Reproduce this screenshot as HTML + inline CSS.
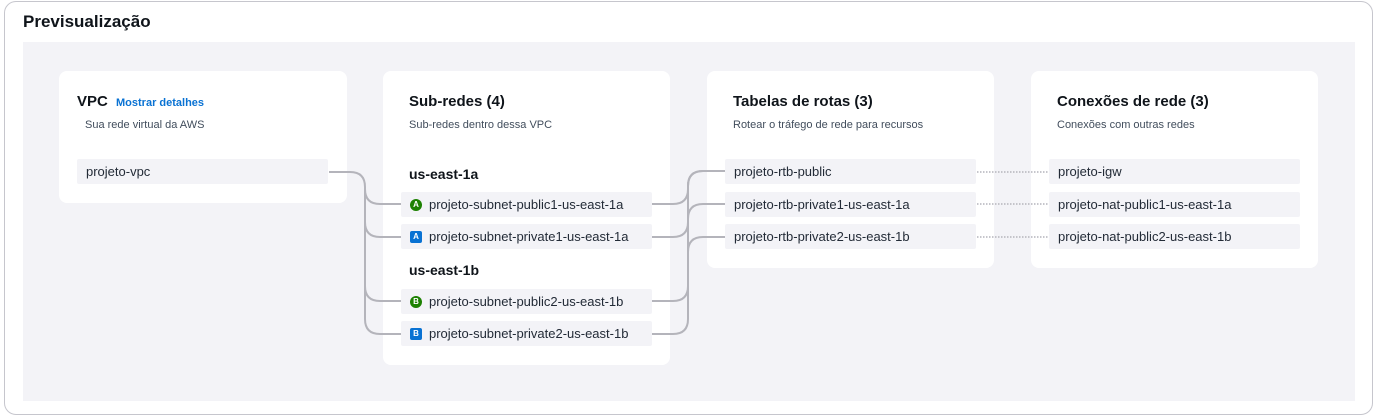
<!DOCTYPE html>
<html><head><meta charset="utf-8"><style>
*{margin:0;padding:0;box-sizing:border-box}
body{width:1378px;height:419px;background:#fff;font-family:"Liberation Sans",sans-serif;color:#0f141a;position:relative;overflow:hidden}
.outer{position:absolute;left:4px;top:1px;width:1369px;height:414px;border:1px solid #c6c6cd;border-radius:12px}
.title{position:absolute;left:23px;top:12px;font-size:17px;font-weight:bold}
.gray{position:absolute;left:23px;top:42px;width:1332px;height:359px;background:#f3f3f7}
.card{position:absolute;background:#fff;border-radius:8px;top:71px}
.h{position:absolute;font-size:15px;font-weight:bold;top:93px}
.s{position:absolute;font-size:11px;color:#414d5c;top:119px}
.it{position:absolute;background:#f3f3f7;height:25px;width:251px;font-size:13px;line-height:25px;padding-left:9px;color:#232b37;border-radius:2px;display:flex;align-items:center}
.az{position:absolute;font-size:14px;font-weight:bold;left:409px}
.b{display:inline-block;width:12px;height:12px;font-size:8px;line-height:12px;text-align:center;color:#fff;font-weight:bold;margin-right:7px;flex:none}
.g{background:#1d8102;border-radius:50%}.bl{background:#0972d3;border-radius:2px}
a{color:#0972d3;text-decoration:none;font-size:11px;font-weight:bold}
</style></head><body>
<div class="outer"></div>
<div class="title">Previsualização</div>
<div class="gray"></div>
<div class="card" style="left:59px;width:288px;height:132px"></div>
<div class="card" style="left:383px;width:287px;height:294px"></div>
<div class="card" style="left:707px;width:287px;height:197px"></div>
<div class="card" style="left:1031px;width:287px;height:197px"></div>
<svg style="position:absolute;left:0;top:0" width="1378" height="419" fill="none" stroke="#b4b4bb" stroke-width="2">
<path d="M329 172H350Q365 172 365 187V319Q365 334 380 334H401"/>
<path d="M365 189Q365 204 380 204H401M365 222Q365 237 380 237H401M365 286Q365 301 380 301H401"/>
<path d="M652 204H673Q688 204 688 189V186Q688 171 703 171H725"/>
<path d="M652 237H673Q688 237 688 222V219Q688 204 703 204H725"/>
<path d="M652 301H673Q688 301 688 286V186Q688 171 703 171"/>
<path d="M652 334H673Q688 334 688 319V252Q688 237 703 237H725"/>
<path d="M977 172H1049M977 204H1049M977 237H1049" stroke-width="1.5" stroke-dasharray="1.5 1.5"/>
</svg>
<div class="h" style="left:77px">VPC <a style="margin-left:4px">Mostrar detalhes</a></div>
<div class="s" style="left:85px">Sua rede virtual da AWS</div>
<div class="it" style="left:77px;top:159px">projeto-vpc</div>
<div class="h" style="left:409px">Sub-redes (4)</div>
<div class="s" style="left:409px">Sub-redes dentro dessa VPC</div>
<div class="az" style="top:166px">us-east-1a</div>
<div class="az" style="top:262px">us-east-1b</div>
<div class="it" style="left:401px;top:192px"><span class="b g">A</span>projeto-subnet-public1-us-east-1a</div>
<div class="it" style="left:401px;top:224px"><span class="b bl">A</span>projeto-subnet-private1-us-east-1a</div>
<div class="it" style="left:401px;top:289px"><span class="b g">B</span>projeto-subnet-public2-us-east-1b</div>
<div class="it" style="left:401px;top:321px"><span class="b bl">B</span>projeto-subnet-private2-us-east-1b</div>
<div class="h" style="left:733px">Tabelas de rotas (3)</div>
<div class="s" style="left:733px">Rotear o tráfego de rede para recursos</div>
<div class="it" style="left:725px;top:159px">projeto-rtb-public</div>
<div class="it" style="left:725px;top:192px">projeto-rtb-private1-us-east-1a</div>
<div class="it" style="left:725px;top:224px">projeto-rtb-private2-us-east-1b</div>
<div class="h" style="left:1057px">Conexões de rede (3)</div>
<div class="s" style="left:1057px">Conexões com outras redes</div>
<div class="it" style="left:1049px;top:159px">projeto-igw</div>
<div class="it" style="left:1049px;top:192px">projeto-nat-public1-us-east-1a</div>
<div class="it" style="left:1049px;top:224px">projeto-nat-public2-us-east-1b</div>
</body></html>
